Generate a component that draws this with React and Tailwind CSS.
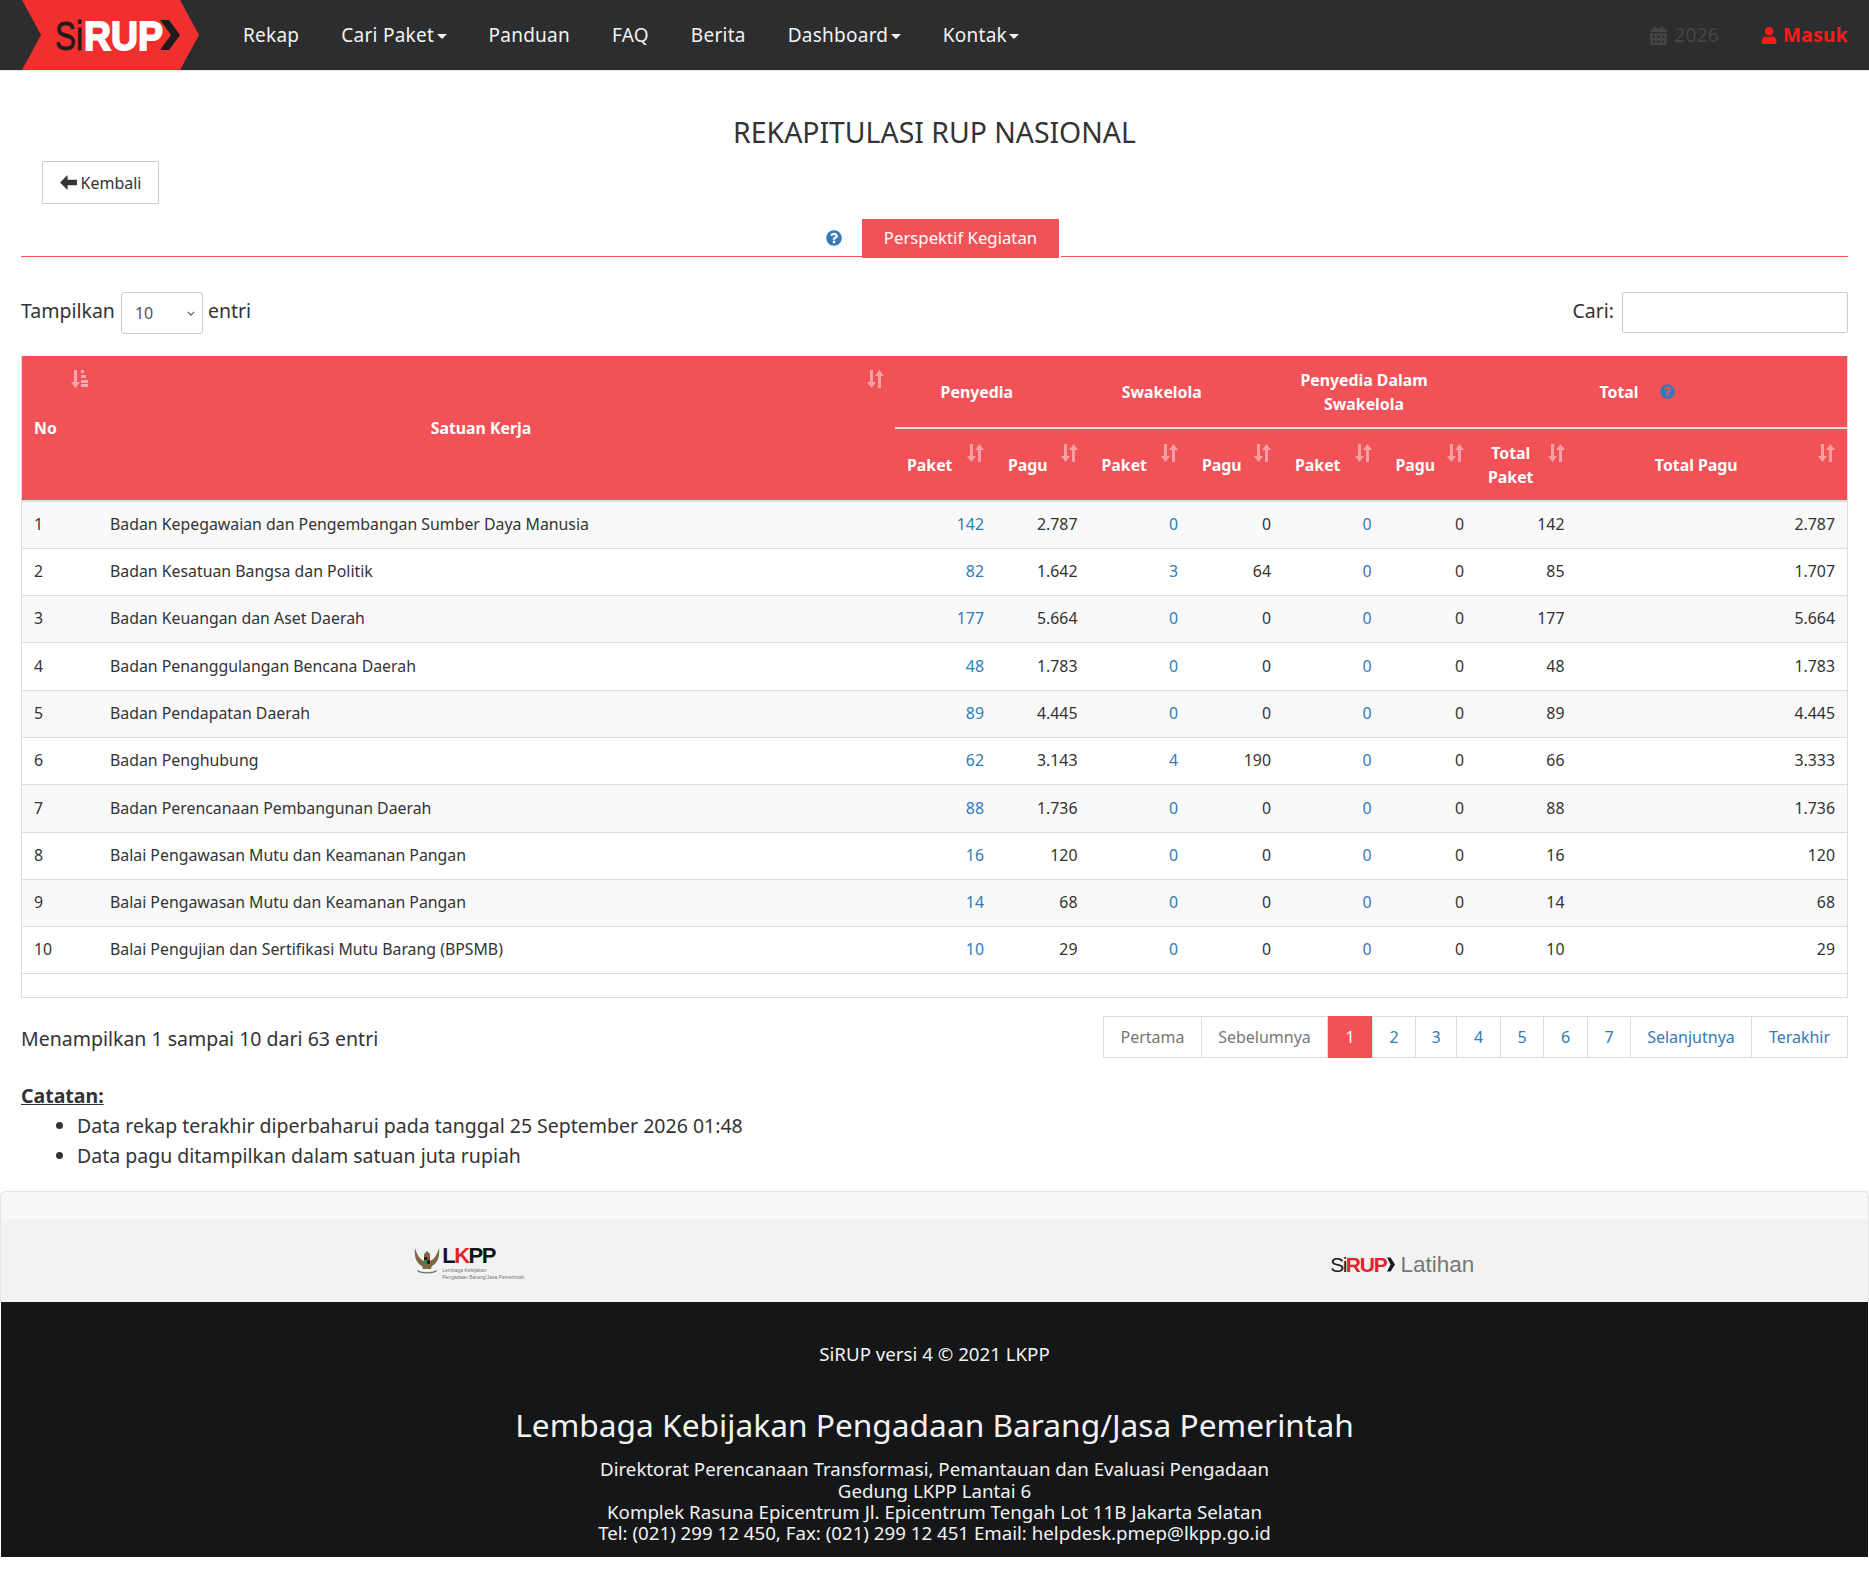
import { FaCalendarAlt, FaQuestionCircle, FaUser } from 'react-icons/fa';

const rows = [
  [1, 'Badan Kepegawaian dan Pengembangan Sumber Daya Manusia', 142, '2.787', 0, 0, 0, 0, 142, '2.787'],
  [2, 'Badan Kesatuan Bangsa dan Politik', 82, '1.642', 3, 64, 0, 0, 85, '1.707'],
  [3, 'Badan Keuangan dan Aset Daerah', 177, '5.664', 0, 0, 0, 0, 177, '5.664'],
  [4, 'Badan Penanggulangan Bencana Daerah', 48, '1.783', 0, 0, 0, 0, 48, '1.783'],
  [5, 'Badan Pendapatan Daerah', 89, '4.445', 0, 0, 0, 0, 89, '4.445'],
  [6, 'Badan Penghubung', 62, '3.143', 4, 190, 0, 0, 66, '3.333'],
  [7, 'Badan Perencanaan Pembangunan Daerah', 88, '1.736', 0, 0, 0, 0, 88, '1.736'],
  [8, 'Balai Pengawasan Mutu dan Keamanan Pangan', 16, '120', 0, 0, 0, 0, 16, '120'],
  [9, 'Balai Pengawasan Mutu dan Keamanan Pangan', 14, '68', 0, 0, 0, 0, 14, '68'],
  [10, 'Balai Pengujian dan Sertifikasi Mutu Barang (BPSMB)', 10, '29', 0, 0, 0, 0, 10, '29'],
];

const navItems = [
  { label: 'Rekap' },
  { label: 'Cari Paket', caret: true },
  { label: 'Panduan' },
  { label: 'FAQ' },
  { label: 'Berita' },
  { label: 'Dashboard', caret: true },
  { label: 'Kontak', caret: true },
];

const pages = [
  { label: 'Pertama', w: 'w-[98px]', muted: true },
  { label: 'Sebelumnya', w: 'w-[126px]', muted: true },
  { label: '1', w: 'w-[45px]', active: true },
  { label: '2', w: 'w-[43px]' },
  { label: '3', w: 'w-[41px]' },
  { label: '4', w: 'w-[44px]' },
  { label: '5', w: 'w-[43px]' },
  { label: '6', w: 'w-[44px]' },
  { label: '7', w: 'w-[43px]' },
  { label: 'Selanjutnya', w: 'w-[121px]' },
  { label: 'Terakhir', w: 'w-[96px]' },
];

const SortIcon = ({ className = '' }) => (
  <svg viewBox="0 0 17 18" className={`absolute w-[17px] h-[18px] opacity-45 ${className}`} fill="white">
    <path d="M3 0h3v12h3l-4.5 6L0 12h3z" />
    <path d="M11 18h3V6h3l-4.5-6L8 6h3z" />
  </svg>
);

const SortActive = ({ className = '' }) => (
  <svg viewBox="0 0 17 18" className={`absolute w-[17px] h-[18px] opacity-50 ${className}`} fill="white">
    <path d="M3 0h3v12h3l-4.5 6L0 12h3z" />
    <path d="M10 0h3v3h-3zM10 5h5v3h-5zM10 10h7v3h-7zM10 14h7v3h-7z" />
  </svg>
);

const SirupLogo = () => (
  <svg viewBox="0 0 178 70" className="w-[178px] h-[70px]">
    <polygon points="0,0 158,0 177,35 158,70 0,70 19,35" fill="#f22f2f" />
    <text y="50" fontFamily="Liberation Sans, sans-serif" fontSize="41">
      <tspan x="33" fill="#1c1c1c" stroke="#1c1c1c" strokeWidth="0.8" textLength="28" lengthAdjust="spacingAndGlyphs">Si</tspan>
      <tspan x="62" fontWeight="700" fill="#fff" stroke="#fff" strokeWidth="1.8" textLength="79" lengthAdjust="spacingAndGlyphs">RUP</tspan>
    </text>
    <polygon points="138,20 147,20 158,35 147,50 138,50 149,35" fill="#1c1c1c" />
  </svg>
);

const Garuda = () => (
  <svg viewBox="0 0 26 28" className="w-[26px] h-[28px]">
    <path d="M1 2c2 6 4 11 9 13V8l3-3 3 3v7c5-2 7-7 9-13 1 8-1 15-7 18l-1 3h-8l-1-3C2 17 0 10 1 2z" fill="#7d6a45" />
    <rect x="10" y="11" width="6" height="7" fill="#1d1d1d" />
    <rect x="13" y="11" width="3" height="3" fill="#c8312c" />
    <rect x="10" y="14" width="3" height="4" fill="#2d8a4e" />
    <path d="M3 24c6 3 14 3 20 0l-1 2c-6 2-12 2-18 0z" fill="#6f6f6f" />
  </svg>
);

const Th = ({ className = '', children, ...rest }) => (
  <th className={`relative pt-[2px] font-bold text-white align-middle leading-[23.4px] ${className}`} {...rest}>{children}</th>
);

const Td = ({ children, link, left, className = '' }) => (
  <td className={`h-[47.3px] px-3 border-b border-[#ddd] ${left ? 'text-left' : 'text-right'} ${className}`}>
    {link ? <a className="text-[#337ab7]">{children}</a> : children}
  </td>
);

export default function App() {
  return (
    <div className="min-h-[1586px] bg-white text-[#333] font-['Noto_Sans',sans-serif]">
      <nav className="flex items-center h-[71px] bg-[#2c2d2f] border-b border-[#e7e7e7] pl-[22px] pr-[21px]">
        <SirupLogo />
        <ul className="flex ml-[43px] text-[19px] tracking-[0.25px] text-[#f2f2f2]">
          {navItems.map(item => (
            <li key={item.label} className="flex items-center mr-[42px]">
              {item.label}
              {item.caret && <span className="ml-[2.5px] mt-[2px] w-0 h-0 border-x-[5px] border-x-transparent border-t-[5px] border-t-[#f2f2f2]" />}
            </li>
          ))}
        </ul>
        <div className="ml-auto flex items-center text-[19px] tracking-[0.3px] text-[#454545]">
          <FaCalendarAlt className="w-[19px] h-[19px] mr-[6px]" />
          2026
        </div>
        <div className="flex items-center ml-[42px] text-[19px] font-bold tracking-[0.4px] text-[#ff1a1a]">
          <FaUser className="w-[16px] h-[17px] mr-[6px]" />
          Masuk
        </div>
      </nav>

      <main className="px-[21px]">
        <h1 className="pt-[41px] text-center text-[28.4px] leading-[40px] text-[#333]">REKAPITULASI RUP NASIONAL</h1>

        <a className="flex items-center justify-center ml-[21px] mt-[9px] w-[117px] h-[43px] bg-white border border-[#ccc] rounded-[1px] text-[16px]">
          <svg viewBox="0 0 18 16" className="w-[17px] h-[15px] mr-[4px]" fill="#333">
            <path d="M8 0v5h10v6H8v5L0 8z" />
          </svg>
          Kembali
        </a>

        <div className="flex justify-center items-end h-[38px] mt-[15px] pl-[18px] border-b border-[#f15257]">
          <FaQuestionCircle className="w-[16px] h-[16px] mb-[10px] mr-[20px] text-[#337ab7]" />
          <div className="flex items-center justify-center -mb-[2px] pb-[2px] w-[199px] h-[39px] bg-[#f15257] border-r-2 border-white text-white text-[16.75px]">
            Perspektif Kegiatan
          </div>
        </div>

        <div className="flex justify-between h-[42px] mt-[35px] text-[19.5px] leading-[26px]">
          <label className="flex items-start">
            <span className="mt-[6px]">Tampilkan</span>
            <span className="relative ml-[6px] mr-[5px]">
              <select className="appearance-none w-[82px] h-[42px] pl-[13px] bg-white border border-[#ccc] rounded-[3px] text-[16px] text-[#555]">
                <option>10</option>
              </select>
              <svg viewBox="0 0 10 6" className="absolute right-[8px] top-[19px] w-[8px] h-[5px]" fill="none" stroke="#555" strokeWidth="1.4">
                <path d="M1 1l4 4 4-4" />
              </svg>
            </span>
            <span className="mt-[6px]">entri</span>
          </label>
          <label className="flex items-start">
            <span className="mt-[6px]">Cari:</span>
            <input className="w-[226px] h-[41px] ml-[8px] bg-white border border-[#ccc] rounded-[2px]" />
          </label>
        </div>

        <div className="mt-[22px] border-x border-b border-[#ddd] pb-[23px]">
          <table className="table-fixed w-full border-collapse text-[15.85px]">
            <colgroup>
              <col className="w-[76px]" />
              <col className="w-[797px]" />
              <col className="w-[101px]" />
              <col className="w-[93.5px]" />
              <col className="w-[100.5px]" />
              <col className="w-[93px]" />
              <col className="w-[100.5px]" />
              <col className="w-[92.5px]" />
              <col className="w-[100.5px]" />
              <col />
            </colgroup>
            <thead className="bg-[#f15257] border-b-2 border-[#ddd]">
              <tr className="h-[72px]">
                <Th rowSpan={2} className="text-left pl-3">
                  No
                  <SortActive className="top-[14px] right-[10px]" />
                </Th>
                <Th rowSpan={2} className="pl-3 pr-[43px]">
                  Satuan Kerja
                  <SortIcon className="top-[14px] right-[11px]" />
                </Th>
                <Th colSpan={2} className="pl-3 pr-[43px] border-b-2 border-[#ddd]">Penyedia</Th>
                <Th colSpan={2} className="pl-3 pr-[61px] border-b-2 border-[#ddd]">Swakelola</Th>
                <Th colSpan={2} className="pl-3 pr-[43px] border-b-2 border-[#ddd]">Penyedia Dalam<br />Swakelola</Th>
                <Th colSpan={2} className="pl-3 pr-[61px] border-b-2 border-[#ddd]">
                  Total
                  <FaQuestionCircle className="inline-block w-[15px] h-[15px] ml-[21px] -mt-[3px] text-[#337ab7]" />
                </Th>
              </tr>
              <tr className="h-[73px]">
                {['Paket', 'Pagu', 'Paket', 'Pagu', 'Paket', 'Pagu'].map((label, i) => (
                  <Th key={i} className="pl-3 pr-[43px] text-left">
                    {label}
                    <SortIcon className="top-[15px] right-[12px]" />
                  </Th>
                ))}
                <Th className="pl-3 pr-[43px]">
                  Total<br />Paket
                  <SortIcon className="top-[15px] right-[12px]" />
                </Th>
                <Th className="pl-3 pr-[43px]">
                  Total Pagu
                  <SortIcon className="top-[15px] right-[12px]" />
                </Th>
              </tr>
            </thead>
            <tbody>
              {rows.map((r, i) => (
                <tr key={r[0]} className={i % 2 === 0 ? 'bg-[#f9f9f9]' : 'bg-white'}>
                  <Td left>{r[0]}</Td>
                  <Td left>{r[1]}</Td>
                  <Td link>{r[2]}</Td>
                  <Td>{r[3]}</Td>
                  <Td link>{r[4]}</Td>
                  <Td>{r[5]}</Td>
                  <Td link>{r[6]}</Td>
                  <Td>{r[7]}</Td>
                  <Td>{r[8]}</Td>
                  <Td>{r[9]}</Td>
                </tr>
              ))}
            </tbody>
          </table>
        </div>

        <div className="flex justify-between items-start mt-[18px]">
          <div className="mt-[10px] text-[19.5px] leading-[26px]">Menampilkan 1 sampai 10 dari 63 entri</div>
          <div className="flex h-[42px] text-[16px] border-y border-r border-[#ddd]">
            {pages.map(p => (
              <a
                key={p.label}
                className={`flex items-center justify-center border-l border-[#ddd] ${p.w} ${p.active ? 'bg-[#f15257] text-white -my-px' : p.muted ? 'text-[#777]' : 'text-[#337ab7]'}`}
              >
                {p.label}
              </a>
            ))}
          </div>
        </div>

        <div className="mt-[23px] text-[19.5px] leading-[30px]">
          <div className="font-bold underline">Catatan:</div>
          <ul className="list-disc pl-[56px]">
            <li>Data rekap terakhir diperbaharui pada tanggal 25 September 2026 01:48</li>
            <li>Data pagu ditampilkan dalam satuan juta rupiah</li>
          </ul>
        </div>
      </main>

      <footer className="mt-[20px]">
        <div className="bg-[#f2f2f2] border-t border-x border-[#e6e6e6] rounded-t-[5px]">
          <div className="h-[27px] bg-[#f8f8f8] rounded-t-[5px]" />
          <div className="grid grid-cols-2 h-[83px]">
            <div className="flex justify-center items-start pt-[27px] pl-[3px]">
              <Garuda />
              <div className="ml-[2px] font-['Liberation_Sans',sans-serif]">
                <div className="text-[22px] leading-[19px] font-bold tracking-[-1.5px] text-[#151515]">L<span className="text-[#e8202a]">K</span>PP</div>
                <div className="text-[5px] leading-[7px] text-[#777] mt-[2px] whitespace-nowrap">Lembaga Kebijakan<br />Pengadaan Barang/Jasa Pemerintah</div>
              </div>
            </div>
            <div className="flex justify-center items-center pt-[7px] pl-[2px] font-['Liberation_Sans',sans-serif]">
              <span className="text-[21px] tracking-[-1.6px] text-[#1c1c1c]">Si</span>
              <span className="text-[21px] font-bold tracking-[-1.2px] text-[#e8202a]">RUP</span>
              <svg viewBox="0 0 9 16" className="w-[8px] h-[15px] ml-[1px]"><polygon points="0,0 4,0 9,8 4,16 0,16 4,8" fill="#1c1c1c" /></svg>
              <span className="ml-[5px] text-[22.5px] text-[#777]">Latihan</span>
            </div>
          </div>
        </div>
        <div className="h-[255px] ml-px mr-px bg-[#151618] text-center text-[#f2f2f2] pt-[39px] text-[18.7px]">
          <div className="leading-[26px]">SiRUP versi 4 © 2021 LKPP</div>
          <div className="mt-[36px] text-[31.7px] leading-[44px]">Lembaga Kebijakan Pengadaan Barang/Jasa Pemerintah</div>
          <div className="mt-[11px] leading-[21.3px]">
            <div>Direktorat Perencanaan Transformasi, Pemantauan dan Evaluasi Pengadaan</div>
            <div>Gedung LKPP Lantai 6</div>
            <div>Komplek Rasuna Epicentrum Jl. Epicentrum Tengah Lot 11B Jakarta Selatan</div>
            <div>Tel: (021) 299 12 450, Fax: (021) 299 12 451 Email: helpdesk.pmep@lkpp.go.id</div>
          </div>
        </div>
      </footer>
    </div>
  );
}
